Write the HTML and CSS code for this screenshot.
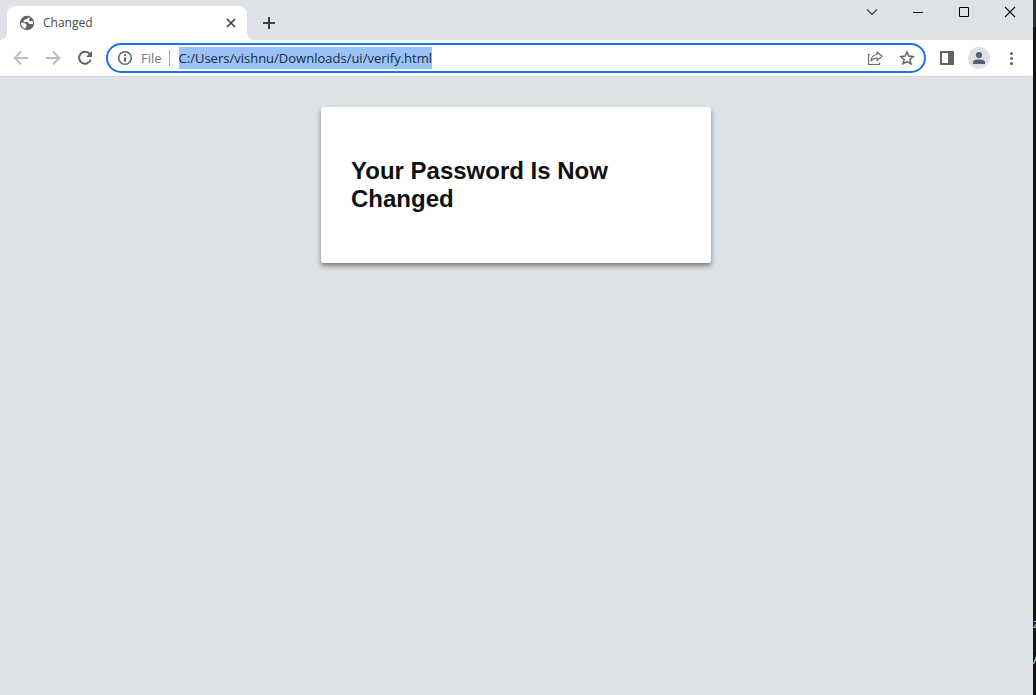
FILE: index.html
```
<!DOCTYPE html>
<html lang="en">
<head>
<meta charset="utf-8">
<title>Changed</title>
<link rel="stylesheet" href="styles.css">
</head>
<body>
<div class="window">
  <header class="tabstrip">
    <div class="tab">
      <svg class="globe" width="16" height="16" viewBox="0 0 16 16"><circle cx="8" cy="8" r="7.200" fill="#5f6368"/><path d="M9.700 2.200C9.400 3.600 8.200 3.400 7 4.300C6.200 4.800 5.300 5 4.600 5.500L4.800 7H8.300C9.300 7.100 9.200 8.600 10.300 8.900L13.800 8.900C14.100 7.600 13.800 6.700 13.400 6H11.300C10 5.900 9.600 4.900 10.100 4L11.300 3Z" fill="#fff"/><path d="M2 7.700H4.800C6.300 7.900 6.500 9.300 7.600 9.700V11.200L6.500 12V13.700C3.800 13 2 10.700 2 7.700Z" fill="#fff"/></svg>
      <span class="tab-title">Changed</span>
      <button class="icon tab-close" aria-label="Close tab"><svg width="16" height="16" viewBox="0 0 16 16"><path d="M4 4L12 12M12 4L4 12" fill="none" stroke="#3c4043" stroke-width="1.700"/></svg></button>
    </div>
    <button class="icon new-tab" aria-label="New tab"><svg width="16" height="16" viewBox="0 0 16 16"><path d="M8 2V14M2 8H14" stroke="#3c4043" stroke-width="2"/></svg></button>
    <div class="window-controls">
      <button class="icon" aria-label="Search tabs"><svg width="12" height="12" viewBox="0 0 12 12"><path d="M1 3.500L6 8.500L11 3.500" fill="none" stroke="#333" stroke-width="1.100"/></svg></button>
      <button class="icon" aria-label="Minimize"><svg width="12" height="12" viewBox="0 0 12 12"><path d="M1 6.500H11" stroke="#000"/></svg></button>
      <button class="icon" aria-label="Maximize"><svg width="12" height="12" viewBox="0 0 12 12"><path d="M1.500 1.500H10.500V10.500H1.500Z" fill="none" stroke="#000"/></svg></button>
      <button class="icon" aria-label="Close"><svg width="12" height="12" viewBox="0 0 12 12"><path d="M1 1L11 11M11 1L1 11" stroke="#111" stroke-width="1.100"/></svg></button>
    </div>
  </header>
  <nav class="toolbar">
    <button class="icon" aria-label="Back"><svg width="16" height="16" viewBox="0 0 16 16"><path d="M15 8H2M8 1.500L1.700 8L8 14.500" fill="none" stroke="#babcbe" stroke-width="1.900"/></svg></button>
    <button class="icon" aria-label="Forward"><svg width="16" height="16" viewBox="0 0 16 16"><path d="M1 8H14M8 1.500L14.300 8L8 14.500" fill="none" stroke="#babcbe" stroke-width="1.900"/></svg></button>
    <button class="icon" aria-label="Reload"><svg width="16" height="16" viewBox="0 0 16 16"><path d="M12.800 4A6 6 0 1 0 13.800 9.500" fill="none" stroke="#5f6368" stroke-width="2"/><path d="M15 1V7H9Z" fill="#5f6368"/></svg></button>
    <div class="omnibox">
      <button class="icon" aria-label="Site information"><svg width="16" height="16" viewBox="0 0 16 16"><circle cx="8" cy="8" r="6.300" fill="none" stroke="#5f6368" stroke-width="1.500"/><path d="M8 4.300V6M8 7.200V11.700" stroke="#5f6368" stroke-width="1.900"/></svg></button>
      <label class="scheme" for="url">File</label>
      <input class="url" id="url" type="text" value="C:/Users/vishnu/Downloads/ui/verify.html" spellcheck="false">
      <button class="icon share" aria-label="Share"><svg width="16" height="16" viewBox="0 0 16 16"><path d="M3 4.500H1.500V14.500H12.500V12.500" fill="none" stroke="#6a6e73" stroke-width="1.200"/><path d="M10 2L15 6.300L10 10.500V8.200C7.500 8 5.500 9 4 11C4.200 7.500 6.500 4.800 10 4.500Z" fill="none" stroke="#6a6e73" stroke-width="1.200" stroke-linejoin="round"/></svg></button>
      <button class="icon" aria-label="Bookmark"><svg width="16" height="16" viewBox="0 0 16 16"><path d="M8 2L9.800 6.100L14.300 6.500L10.900 9.500L11.900 13.800L8 11.500L4.100 13.800L5.100 9.500L1.700 6.500L6.200 6.100Z" fill="none" stroke="#5f6368" stroke-width="1.500"/></svg></button>
    </div>
    <button class="icon" aria-label="Side panel"><svg width="16" height="16" viewBox="0 0 16 16"><path d="M1 1H15V15H1ZM3 3V13H9V3Z" fill="#5f6368" fill-rule="evenodd"/></svg></button>
    <button class="icon avatar" aria-label="Profile"><svg width="16" height="16" viewBox="0 0 16 16"><circle cx="8" cy="5" r="3.100" fill="#566173"/><path d="M2 14V12C2 8.700 14 8.700 14 12V14Z" fill="#566173"/></svg></button>
    <button class="icon" aria-label="Menu"><svg width="16" height="16" viewBox="0 0 16 16" fill="#5f6368"><circle cx="8.500" cy="3.500" r="1.500"/><circle cx="8.500" cy="8.500" r="1.500"/><circle cx="8.500" cy="13.500" r="1.500"/></svg></button>
  </nav>
  <main class="page">
    <section class="card">
      <h1 class="message">Your Password Is Now Changed</h1>
    </section>
  </main>
</div>
<aside class="backdrop">
  <span>z</span>
  <span>A</span>
</aside>
</body>
</html>
```
FILE: styles.css
```
* { box-sizing: border-box; }

body {
  display: flex;
  min-height: 100vh;
  margin: 0;
  background: #111416;
  font-family: "Open Sans", "Noto Sans", sans-serif;
}

.window {
  display: flex;
  flex: 1;
  flex-direction: column;
  background: #dde2e6;
}

.backdrop {
  display: flex;
  flex: none;
  flex-direction: column;
  justify-content: flex-end;
  gap: 20px;
  width: 3px;
  padding-bottom: 27px;
  overflow: hidden;
  background: linear-gradient(#2a2d2e 27px, #111416 27px);
  font-size: 12px;
  line-height: 16px;
  color: #d4d4d4;
}

.icon {
  display: flex;
  flex: none;
  align-items: center;
  justify-content: center;
  width: 32px;
  height: 32px;
  padding: 0;
  border: 0;
  background: none;
}

.tabstrip {
  display: flex;
  height: 40px;
  padding-left: 7px;
  background: #dee1e6;
}

.tab {
  position: relative;
  display: flex;
  align-items: center;
  gap: 8px;
  width: 240px;
  margin-top: 6px;
  padding: 0 8px 0 12px;
  border-radius: 8px 8px 0 0;
  background: #fff;
}

.tab::before,
.tab::after {
  content: "";
  position: absolute;
  bottom: 0;
  width: 8px;
  height: 8px;
}

.tab::before {
  right: 100%;
  background: radial-gradient(circle at 0 0, transparent 8px, #fff 8px);
}

.tab::after {
  left: 100%;
  background: radial-gradient(circle at 100% 0, transparent 8px, #fff 8px);
}

.tab-title {
  flex: 1;
  font-size: 12px;
  line-height: 16px;
  color: #45494d;
}

.tab-close {
  width: 16px;
  height: 16px;
}

.new-tab {
  width: 28px;
  height: 28px;
  margin: 9px 0 0 8px;
}

.window-controls {
  display: flex;
  margin-left: auto;
}

.window-controls .icon {
  width: 46px;
  height: 24px;
}

.toolbar {
  display: flex;
  align-items: center;
  height: 37px;
  padding: 0 6px 0 5px;
  border-bottom: 1px solid #d5d8dc;
  background: #fff;
}

.omnibox {
  display: flex;
  flex: 1;
  align-items: center;
  height: 30px;
  margin: 0 5px;
  padding: 0 1px;
  border: 2px solid #1a73e8;
  border-radius: 15px;
  background: #fff;
}

.scheme {
  padding-right: 7px;
  border-right: 1px solid #9aa0a6;
  font-size: 13px;
  line-height: 16px;
  color: #75797e;
}

.url {
  field-sizing: content;
  height: 22px;
  margin-left: 9px;
  padding: 0;
  border: 0;
  outline: 0;
  background: #9ac2f7;
  font: 13px/22px "Open Sans", "Noto Sans", sans-serif;
  color: #202a38;
}

.share { margin-left: auto; }

.avatar {
  width: 22px;
  height: 22px;
  margin: 0 5px;
  border-radius: 50%;
  background: #dee1e6;
}

.page {
  display: flex;
  flex: 1;
  align-items: flex-start;
  justify-content: center;
  padding: 30px 31px 30px 30px;
}

.card {
  width: 100%;
  max-width: 390px;
  padding: 30px;
  border-radius: 3px;
  background: #fff;
  box-shadow: 0 3px 5px rgba(0, 0, 0, 0.45);
}

.message {
  margin: 20px 0;
  font: bold 24px/28px "Liberation Sans", Arial, sans-serif;
  color: #111;
}
```
